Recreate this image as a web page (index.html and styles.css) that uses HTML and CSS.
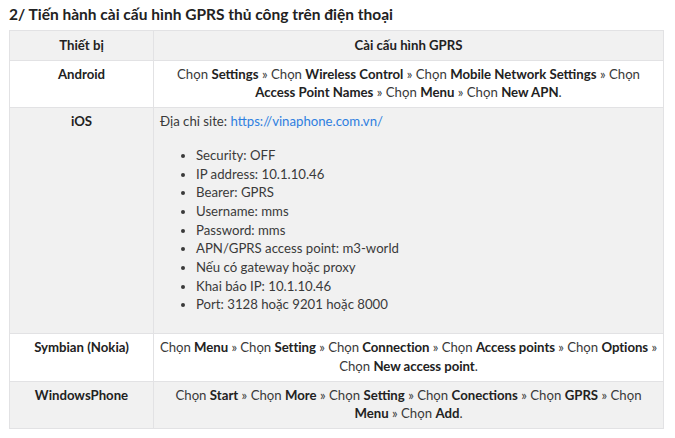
FILE: index.html
```html
<!DOCTYPE html>
<html lang="vi">
<head>
<meta charset="utf-8">
<link rel="stylesheet" href="styles.css">
</head>
<body>
<h3 class="title">2/ Tiến hành cài cấu hình GPRS thủ công trên điện thoại</h3>
<table class="gprs">
  <tr class="head">
    <th class="c1">Thiết bị</th>
    <th class="c2">Cài cấu hình GPRS</th>
  </tr>
  <tr class="white">
    <td class="dev">Android</td>
    <td class="cfg center">Chọn <b>Settings</b> » Chọn <b>Wireless Control</b> » Chọn <b>Mobile Network Settings</b> » Chọn <b>Access Point Names</b> » Chọn <b>Menu</b> » Chọn <b>New APN</b>.</td>
  </tr>
  <tr class="grey">
    <td class="dev">iOS</td>
    <td class="cfg">Địa chỉ site: <a href="#">https://vinaphone.com.vn/</a>
      <ul class="list">
        <li>Security: OFF</li>
        <li>IP address: 10.1.10.46</li>
        <li>Bearer: GPRS</li>
        <li>Username: mms</li>
        <li>Password: mms</li>
        <li>APN/GPRS access point: m3-world</li>
        <li>Nếu có gateway hoặc proxy</li>
        <li>Khai báo IP: 10.1.10.46</li>
        <li>Port: 3128 hoặc 9201 hoặc 8000</li>
      </ul>
    </td>
  </tr>
  <tr class="white">
    <td class="dev">Symbian (Nokia)</td>
    <td class="cfg center tight">Chọn <b>Menu</b> » Chọn <b>Setting</b> » Chọn <b>Connection</b> » Chọn <b>Access points</b> » Chọn <b>Options</b>&nbsp;» Chọn <b>New access point</b>.</td>
  </tr>
  <tr class="grey">
    <td class="dev">WindowsPhone</td>
    <td class="cfg center narrow">Chọn <b>Start</b> » Chọn <b>More</b> » Chọn <b>Setting</b> » Chọn <b>Conections</b> » Chọn <b>GPRS</b> » Chọn <b>Menu</b> » Chọn <b>Add</b>.</td>
  </tr>
</table>
</body>
</html>
```
FILE: styles.css
```css
body {
  margin: 0;
  padding: 5px 9px;
  background: #fff;
  font-family: "Lato", "Noto Sans", sans-serif;
  color: #3a3a3a;
}
.title {
  margin: 0 0 7px 0;
  font-size: 15.5px;
  line-height: 18px;
  font-weight: 700;
  color: #222;
}
.gprs {
  width: 655px;
  border-collapse: collapse;
  font-size: 13.2px;
  line-height: 18.7px;
}
.gprs th, .gprs td {
  border: 1px solid #e2e2e4;
  padding: 4px 4px 5px;
  vertical-align: top;
}
.gprs th {
  background: #f1f1f1;
  font-weight: 700;
  color: #222;
  padding: 5px 4px 5px;
}
.c1 { width: 135px; }
.dev {
  text-align: center;
  font-weight: 700;
  color: #222;
}
.center { text-align: center; }
.gprs td.narrow { padding-left: 8px; padding-right: 8px; }
.gprs td.tight { padding-left: 1px; padding-right: 1px; letter-spacing: -0.05px; }
.white td { background: #fff; }
.grey td { background: #f1f1f1; }
.cfg b { color: #222; font-weight: 700; }
.cfg a { color: #2f7fe0; text-decoration: none; }
.gprs td.cfg:not(.center) { padding-left: 6px; }
.list {
  margin: 15px 0 14px;
  padding-left: 36px;
  list-style: disc;
}
```
